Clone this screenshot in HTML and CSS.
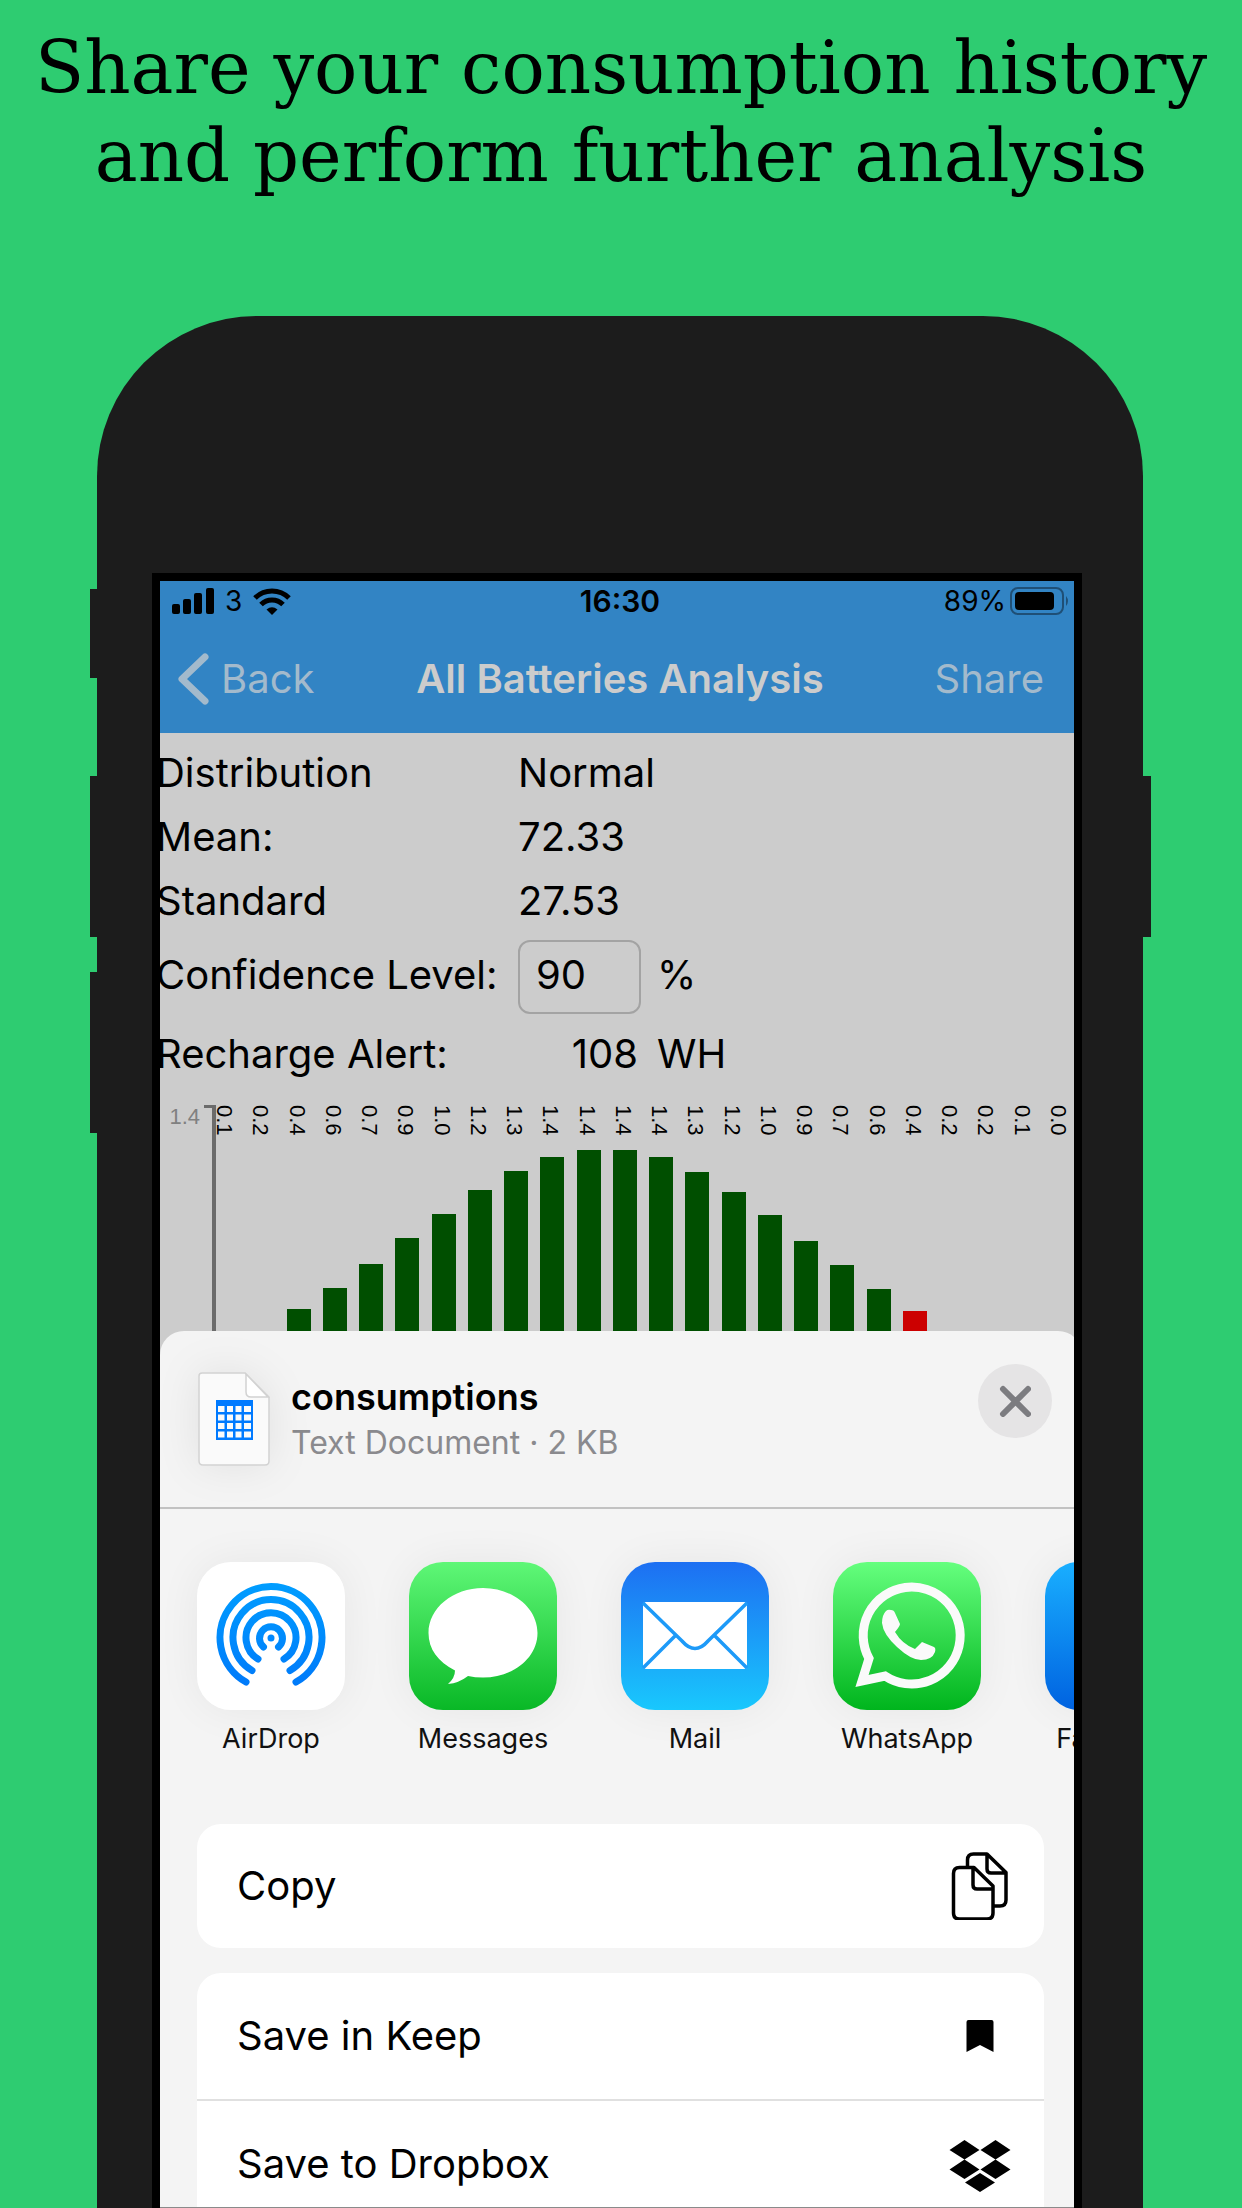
FILE: index.html
```html
<!DOCTYPE html>
<html lang="en">
<head>
<meta charset="utf-8">
<meta name="viewport" content="width=device-width, initial-scale=1">
<title>Share your consumption history</title>
<link rel="stylesheet" href="styles.css">
</head>
<body>
<main class="poster">
  <h1 class="headline">Share your consumption history<br>and perform further analysis</h1>

  <div class="phone">
    <span class="side-key mute"></span>
    <span class="side-key volume-up"></span>
    <span class="side-key volume-down"></span>
    <span class="side-key power"></span>

    <div class="screen">
      <header class="topbar">
        <div class="status">
          <div class="status-left">
            <svg width="42" height="28" viewBox="0 0 42 28" aria-hidden="true"><rect x="0" y="17" width="8" height="10" rx="2"/><rect x="11" y="12" width="8" height="15" rx="2"/><rect x="22" y="6" width="8" height="21" rx="2"/><rect x="34" y="1" width="8" height="26" rx="2"/></svg>
            <span>3</span>
            <svg width="38" height="28" viewBox="0 0 38 28" aria-hidden="true"><g fill="none" stroke="#000" stroke-width="5"><path d="M2 11a24 24 0 0 1 34 0"/><path d="M8 17.500a15.500 15.500 0 0 1 22 0"/></g><path d="M13.500 22.500q5.500-4.500 11 0L19 28z"/></svg>
          </div>
          <time class="clock">16:30</time>
          <div class="status-right">
            <span>89%</span>
            <svg width="58" height="28" viewBox="0 0 58 28" aria-hidden="true"><rect x="1" y="1" width="52" height="26" rx="7" fill="none" stroke="#1f4f76" stroke-width="2"/><rect x="5" y="5" width="39" height="18" rx="4"/><path d="M56 9q4 5 0 10z" fill="#1f4f76"/></svg>
          </div>
        </div>
        <nav class="navbar">
          <button class="nav-button back" type="button">
            <svg width="31" height="52" viewBox="0 0 31 52" aria-hidden="true"><path d="M27 4 4 26l23 22" fill="none" stroke="currentColor" stroke-width="7" stroke-linecap="round" stroke-linejoin="round"/></svg>
            Back
          </button>
          <h2 class="nav-title">All Batteries Analysis</h2>
          <button class="nav-button share" type="button">Share</button>
        </nav>
      </header>

      <section class="analysis">
        <div class="stats">
          <span>Distribution</span><span class="wide">Normal</span>
          <span>Mean:</span><span class="wide">72.33</span>
          <span>Standard</span><span class="wide">27.53</span>
          <label class="level" for="confidence">Confidence Level:</label><input id="confidence" type="text" value="90"><span class="level">%</span>
          <span>Recharge Alert:</span><span class="amount">108</span><span>WH</span>
        </div>
        <div class="chart">
          <span class="axis-max">1.4</span>
          <div class="plot">
            <div class="col"><span>0.1</span></div>
            <div class="col"><span>0.2</span></div>
            <div class="col"><span>0.4</span><i class="bar" style="height:22px"></i></div>
            <div class="col"><span>0.6</span><i class="bar" style="height:43px"></i></div>
            <div class="col"><span>0.7</span><i class="bar" style="height:67px"></i></div>
            <div class="col"><span>0.9</span><i class="bar" style="height:93px"></i></div>
            <div class="col"><span>1.0</span><i class="bar" style="height:117px"></i></div>
            <div class="col"><span>1.2</span><i class="bar" style="height:141px"></i></div>
            <div class="col"><span>1.3</span><i class="bar" style="height:160px"></i></div>
            <div class="col"><span>1.4</span><i class="bar" style="height:174px"></i></div>
            <div class="col"><span>1.4</span><i class="bar" style="height:181px"></i></div>
            <div class="col"><span>1.4</span><i class="bar" style="height:181px"></i></div>
            <div class="col"><span>1.4</span><i class="bar" style="height:174px"></i></div>
            <div class="col"><span>1.3</span><i class="bar" style="height:159px"></i></div>
            <div class="col"><span>1.2</span><i class="bar" style="height:139px"></i></div>
            <div class="col"><span>1.0</span><i class="bar" style="height:116px"></i></div>
            <div class="col"><span>0.9</span><i class="bar" style="height:90px"></i></div>
            <div class="col"><span>0.7</span><i class="bar" style="height:66px"></i></div>
            <div class="col"><span>0.6</span><i class="bar" style="height:42px"></i></div>
            <div class="col"><span>0.4</span><i class="bar alert" style="height:20px"></i></div>
            <div class="col"><span>0.2</span></div>
            <div class="col"><span>0.2</span></div>
            <div class="col"><span>0.1</span></div>
            <div class="col"><span>0.0</span></div>
          </div>
        </div>
      </section>

      <section class="sheet">
        <header class="file">
          <svg class="file-icon" width="72" height="94" viewBox="0 0 72 94" aria-hidden="true"><path d="M4 1h43l24 24v64q0 4-4 4H5q-4 0-4-4V4q0-3 3-3z" fill="#fafafa" stroke="#d2d2d2" stroke-width="1.500"/><path d="M48 2v18q0 5 5 5h17z" fill="#fff" stroke="#d2d2d2" stroke-width="1.500"/><g transform="translate(0 1)"><path d="M18 27h37v40H18z" fill="#007aff"/><path d="M20 33h6.500v6H20zm9 0h6v6h-6zm8.500 0h6v6h-6zm8.500 0h7v6h-7zM20 41.500h6.500v6H20zm9 0h6v6h-6zm8.500 0h6v6h-6zm8.500 0h7v6h-7zM20 50h6.500v6H20zm9 0h6v6h-6zm8.500 0h6v6h-6zm8.500 0h7v6h-7zM20 58.500h6.500v6H20zm9 0h6v6h-6zm8.500 0h6v6h-6zm8.500 0h7v6h-7z" fill="#fafafa"/></g></svg>
          <div class="file-text">
            <h3>consumptions</h3>
            <p>Text Document · 2 KB</p>
          </div>
          <button class="close" type="button" aria-label="Close">
            <svg width="32" height="32" viewBox="0 0 32 32" aria-hidden="true"><path d="M4 4l25 25M29 4 4 29" stroke="#7c7c80" stroke-width="6" stroke-linecap="round"/></svg>
          </button>
        </header>

        <div class="apps">
          <button class="app" type="button">
            <svg class="app-icon" viewBox="0 0 148 148" aria-hidden="true"><defs><linearGradient id="air" gradientUnits="userSpaceOnUse" x1="0" y1="22" x2="0" y2="124"><stop offset="0" stop-color="#009dff"/><stop offset="1" stop-color="#007afa"/></linearGradient></defs><rect width="148" height="148" fill="#fff"/><g fill="none" stroke="url(#air)" stroke-width="7" stroke-linecap="round"><path d="M49 120A51 51 0 1 1 99 120"/><path d="M55 108.500A38 38 0 1 1 93 108.500"/><path d="M61 97A25 25 0 1 1 87 97"/><path d="M66.500 85A11.500 11.500 0 1 1 81.500 85"/></g><circle cx="74" cy="76" r="3.500" fill="#0088ff"/></svg>
            AirDrop
          </button>
          <button class="app" type="button">
            <svg class="app-icon" viewBox="0 0 148 148" aria-hidden="true"><defs><linearGradient id="msg" x1="0" y1="0" x2="0" y2="1"><stop offset="0" stop-color="#5ff777"/><stop offset="1" stop-color="#09b826"/></linearGradient></defs><rect width="148" height="148" fill="url(#msg)"/><path d="M74 26c30 0 54.500 20 54.500 45S104 115.500 74 115.500q-8 0-15-1.500-9 7-20 8 7-6 7-13.500C29 100 19.500 87 19.500 71 19.500 46 44 26 74 26z" fill="#fff"/></svg>
            Messages
          </button>
          <button class="app" type="button">
            <svg class="app-icon" viewBox="0 0 148 148" aria-hidden="true"><defs><linearGradient id="mail" x1="0" y1="0" x2="0" y2="1"><stop offset="0" stop-color="#1d6ff2"/><stop offset="1" stop-color="#19c8fd"/></linearGradient></defs><rect width="148" height="148" fill="url(#mail)"/><rect x="22" y="40" width="104" height="67" rx="3" fill="#fff"/><path d="M22 41l39 38q13 15 26 0l39-38M54 74l-32 32M94 74l32 32" fill="none" stroke="#1d9af8" stroke-width="3.500"/></svg>
            Mail
          </button>
          <button class="app" type="button">
            <svg class="app-icon" viewBox="0 0 148 148" aria-hidden="true"><defs><linearGradient id="wa" x1="0" y1="0" x2="0" y2="1"><stop offset="0" stop-color="#65ff7e"/><stop offset="1" stop-color="#00b51d"/></linearGradient></defs><rect width="148" height="148" fill="url(#wa)"/><path d="M29 119l7-22.500A48.500 48.500 0 1 1 52 114z" fill="none" stroke="#fafafa" stroke-width="9"/><path d="M53 49q2-2 5-1 3 0 4 3l5 11q0 2-5 8 7 12 20 17l7-7 12 5q2 1 1 5-3 8-14 8-10 0-24-13Q50 72 49 61q0-8 4-12z" fill="#fafafa"/></svg>
            WhatsApp
          </button>
          <button class="app" type="button">
            <svg class="app-icon" viewBox="0 0 148 148" aria-hidden="true"><defs><linearGradient id="fb" x1="0" y1="0" x2="0" y2="1"><stop offset="0" stop-color="#19afff"/><stop offset="1" stop-color="#0062e0"/></linearGradient></defs><rect width="148" height="148" fill="url(#fb)"/></svg>
            Facebook
          </button>
        </div>

        <div class="actions">
          <button class="action" type="button">Copy
            <svg width="64" height="68" viewBox="0 0 64 68" aria-hidden="true"><g fill="none" stroke="#000" stroke-width="3.500" stroke-linejoin="round"><path d="M19.500 14V8q0-6 6-6H39l19 18.500V48q0 6-6 6h-6M39 2v15q0 4 4 4h15"/><path d="M11.500 15.500H26L45 34v27q0 6-6 6H11.500q-6 0-6-6V21.500q0-6 6-6zM25 15.500V33q0 4 4 4h16"/></g></svg>
          </button>
        </div>
        <div class="actions">
          <button class="action" type="button">Save in Keep
            <svg width="64" height="32" viewBox="0 0 64 32" aria-hidden="true"><path d="M20.500 0h23q2 0 2 2v30L32 25 18.500 32V2q0-2 2-2z"/></svg>
          </button>
          <button class="action last" type="button">Save to Dropbox
            <svg width="64" height="60" viewBox="0 -5 64 60" aria-hidden="true"><path d="M16.500 1l15 10-15 9.500L1.500 11zM47.500 1l15 10-15 9.500-15-9.500zM16.500 20.500l15 10-15 9.500-15-9.500zM47.500 20.500l15 10-15 9.500-15-9.500zM32 34l15 9.500L32 53l-15-9.500z"/></svg>
          </button>
        </div>
      </section>
    </div>
  </div>
</main>
</body>
</html>
```
FILE: styles.css
```css
* {
  box-sizing: border-box;
}

body {
  margin: 0;
  background: #2ecc71;
  color: #000;
  font-family: Inter, "Liberation Sans", sans-serif;
  font-size: 40px;
  line-height: 48px;
}

button {
  padding: 0;
  border: 0;
  background: none;
  color: inherit;
  font: inherit;
}

h1, h2, h3, p {
  margin: 0;
}

svg {
  display: block;
  flex: none;
}

.poster {
  display: flex;
  flex-direction: column;
  min-height: 100vh;
}

.headline {
  height: 316px;
  padding-top: 24px;
  font-family: "DejaVu Serif", serif;
  font-size: 72px;
  font-weight: 400;
  line-height: 88px;
  text-align: center;
  white-space: nowrap;
}

/* Device frame */
.phone {
  position: relative;
  display: flex;
  flex: 1;
  margin: 0 99px 0 97px;
  padding: 257px 61px 0 55px;
  border-radius: 160px 160px 0 0;
  background: #1c1c1c;
}

.side-key {
  position: absolute;
  left: -7px;
  width: 8px;
  height: 161px;
  background: #1c1c1c;
}

.mute {
  top: 273px;
  height: 89px;
}

.volume-up {
  top: 460px;
}

.volume-down {
  top: 656px;
}

.power {
  top: 460px;
  right: -8px;
  left: auto;
}

.screen {
  display: flex;
  flex: 1;
  flex-direction: column;
  min-width: 0;
  overflow: hidden;
  border: 8px solid #000;
  border-bottom: 0;
  background: #ccc;
}

/* Status and navigation */
.topbar {
  height: 152px;
  background: #3284c4;
}

.status {
  display: grid;
  grid-template-columns: 1fr auto 1fr;
  align-items: center;
  height: 40px;
  padding: 0 6px 0 12px;
  font-size: 28px;
  line-height: 40px;
}

.status-left,
.status-right {
  display: flex;
  align-items: center;
  gap: 11px;
}

.status-right {
  justify-content: flex-end;
  gap: 4px;
}

.clock {
  font-size: 30px;
  font-weight: 600;
}

.navbar {
  display: grid;
  grid-template-columns: 1fr auto 1fr;
  align-items: center;
  height: 116px;
  padding: 0 12px 0 18px;
}

.nav-button {
  display: flex;
  align-items: center;
  gap: 12px;
  color: #a3bacc;
}

.share {
  justify-self: end;
  margin-right: 18px;
}

.nav-title {
  color: #ccc;
  font-size: 40px;
  font-weight: 600;
}

/* Statistics */
.analysis {
  height: 598px;
  padding-top: 8px;
}

.stats {
  display: grid;
  grid-template-columns: 346px 123px 1fr;
  grid-template-rows: 64px 64px 64px 87px 68px;
  column-gap: 16px;
  align-items: center;
  margin-left: -4px;
}

.wide {
  grid-column: span 2;
}

.level {
  padding-bottom: 4px;
}

.amount {
  padding-right: 3px;
  text-align: right;
}

#confidence {
  width: 100%;
  height: 74px;
  padding: 0 16px 4px;
  border: 2px solid #a3a3a3;
  border-radius: 12px;
  background: transparent;
  color: inherit;
  font: inherit;
}

/* Histogram */
.chart {
  display: flex;
  align-items: flex-start;
  height: 243px;
  margin-right: -4px;
  padding-top: 17px;
  font-family: "Liberation Sans", Arial, sans-serif;
  font-size: 22px;
  line-height: 24px;
}

.axis-max {
  width: 48px;
  padding-right: 8px;
  color: #808080;
  text-align: right;
}

.plot {
  position: relative;
  display: grid;
  flex: 1;
  grid-template-columns: repeat(24, 1fr);
  height: 226px;
}

.plot::before {
  position: absolute;
  top: 0;
  bottom: 0;
  left: -4px;
  width: 12px;
  border-top: 3px solid #6b6b6b;
  border-right: 4px solid #6b6b6b;
  content: "";
}

.plot::before {
  width: 8px;
}

.col {
  display: flex;
  flex-direction: column;
  align-items: center;
  justify-content: space-between;
}

.col span {
  z-index: 1;
  width: 24px;
  height: 31px;
  margin-right: 4px;
  text-align: right;
  writing-mode: vertical-rl;
}

.bar {
  width: 24px;
  background: #004f00;
}

.alert {
  background: #c00;
}

/* Share sheet */
.sheet {
  flex: 1;
  margin-right: -8px;
  padding-right: 8px;
  border-bottom: 1px solid #8a8a8a;
  border-radius: 24px 24px 0 0;
  background: #f4f4f4;
}

.file {
  display: flex;
  align-items: flex-start;
  height: 178px;
  margin-right: -8px;
  padding: 33px 30px 0 38px;
  border-bottom: 2px solid #c2c2c2;
}

.file-icon {
  margin-top: 8px;
  filter: drop-shadow(0 0 20px rgba(0, 0, 0, 0.08));
}

.file-text {
  flex: 1;
  padding: 10px 0 0 21px;
}

.file-text h3 {
  font-size: 36px;
  font-weight: 600;
  line-height: 46px;
}

.file-text p {
  color: #8a8a8e;
  font-size: 32px;
  line-height: 46px;
}

.close {
  display: grid;
  width: 74px;
  height: 74px;
  place-items: center;
  border-radius: 50%;
  background: #e5e4e5;
}

.apps {
  display: flex;
  gap: 64px;
  height: 276px;
  padding: 53px 0 0 37px;
}

.app {
  display: flex;
  flex: none;
  flex-direction: column;
  align-items: center;
  gap: 13px;
  width: 148px;
  color: #111;
  font-size: 27px;
  line-height: 32px;
}

.app-icon {
  width: 148px;
  height: 148px;
  border-radius: 34px;
  box-shadow: 0 0 44px rgba(0, 0, 0, 0.06);
}

.actions {
  margin: 39px 30px 0 37px;
  overflow: hidden;
  border-radius: 24px;
  background: #fff;
}

.actions + .actions {
  margin-top: 25px;
  border-radius: 24px 24px 0 0;
}

.action {
  display: flex;
  align-items: center;
  justify-content: space-between;
  width: 100%;
  height: 124px;
  padding: 0 32px 0 40px;
}

.actions + .actions .action {
  height: 128px;
  border-bottom: 2px solid #e0e0e0;
}

.actions + .actions .last {
  height: 106px;
  padding-top: 20px;
  border-bottom: 0;
}
```
